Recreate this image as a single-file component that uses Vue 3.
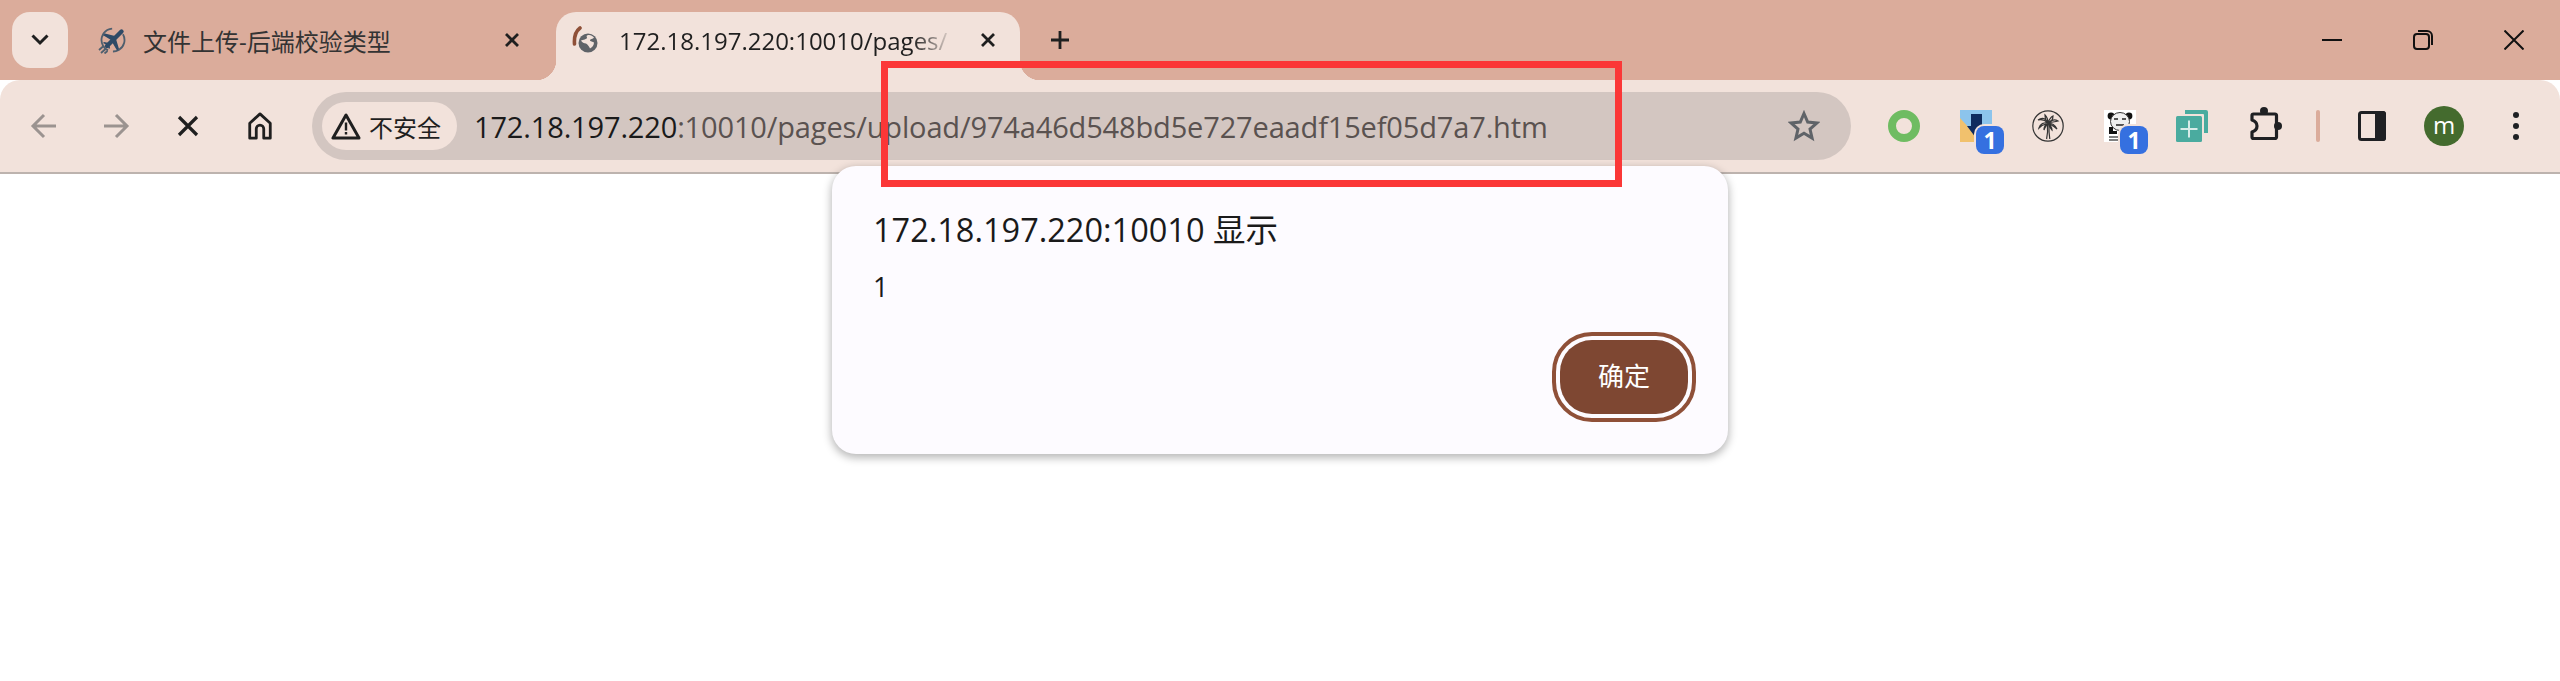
<script setup>
  const url = { host: '172.18.197.220', rest: ':10010/pages/upload/974a46d548bd5e727eaadf15ef05d7a7.htm' }
</script>

<template>
  <div class="browser">
    <div class="tabstrip">
      <button class="tab-search">
        <svg width="20" height="20" viewBox="0 0 20 20"><path d="M2.5 5.500L10 13l7.500-7.500" fill="none" stroke="#1f1f1f" stroke-width="3" /></svg>
      </button>
      <div class="tab">
        <svg class="favicon" viewBox="0 0 28 28">
          <circle cx="15" cy="14" r="11.5" fill="none" stroke="#4f5f6e" stroke-width="1.8" stroke-dasharray="24 5 30 13" transform="rotate(-30 15 14)" />
          <path d="M23.5 5.500L9 20" stroke="#2f4a66" stroke-width="4.4" stroke-linecap="round" />
          <path d="M17 10L7 7.500l-1.800 1.800L13 14zM18 13l3 10-1.800 1.800L14 16zM11 17l-5-1-1 1 4 2 2 4 1-1z" fill="#2f4a66" />
          <path d="M1 24l4-3.500M3 27l4.500-4M6.500 27.500l3-2.500" stroke="#4f5f6e" stroke-width="1.8" />
        </svg>
        <span class="tab-title">文件上传-后端校验类型</span>
        <svg class="tab-close" viewBox="0 0 16 16"><path d="M2 2l12 12M14 2L2 14" stroke="#1f1f1f" stroke-width="2.8" /></svg>
      </div>
      <div class="tab active">
        <svg class="favicon" viewBox="0 0 28 28">
          <path d="M10 2C6 5 4 11 4.500 18" fill="none" stroke="#8f5038" stroke-width="3.6" stroke-linecap="round" />
          <circle cx="18" cy="17" r="9.500" fill="#5f6368" />
          <path d="M17 9.500c3-1 5 0 7 2-1 2-4 1-4 3 0 1 3 1 4 2 0 3-2 5-4 6-1-2-2-4-4-5-2 0-4-1-5-3 2-1 6-1 6-3 0-1-1-1 0-2z" fill="#f2e2db" />
        </svg>
        <span class="tab-title url-title">172.18.197.220:10010/pages/</span>
        <svg class="tab-close" viewBox="0 0 16 16"><path d="M2 2l12 12M14 2L2 14" stroke="#1f1f1f" stroke-width="2.8" /></svg>
      </div>
      <svg class="new-tab" viewBox="0 0 20 20"><path d="M10 1v18M1 10h18" stroke="#1f1f1f" stroke-width="2.8" /></svg>
      <div class="window-btns">
        <svg viewBox="0 0 20 20"><path d="M0 10h20" stroke="#111" stroke-width="2" /></svg>
        <svg viewBox="0 0 20 20" fill="none" stroke="#111" stroke-width="2">
          <rect x="1" y="4" width="15" height="15" rx="3" />
          <path d="M5 1h9a5 5 0 0 1 5 5v9" />
        </svg>
        <svg viewBox="0 0 20 20"><path d="M0.500 0.500l19 19M19.500 0.500l-19 19" stroke="#111" stroke-width="2" /></svg>
      </div>
    </div>

    <div class="toolbar">
      <div class="nav-btns">
        <svg viewBox="0 0 28 28"><path d="M26 14H4M14 3L3 14l11 11" fill="none" stroke="#9b9390" stroke-width="3" /></svg>
        <svg viewBox="0 0 28 28"><path d="M2 14h22M14 3l11 11-11 11" fill="none" stroke="#9b9390" stroke-width="3" /></svg>
        <svg viewBox="0 0 28 28"><path d="M5 5l18 18M23 5L5 23" stroke="#1f1f1f" stroke-width="3.2" /></svg>
        <svg viewBox="0 0 28 30"><path d="M3 12L14 2l11 10v16h-7V18a4 4 0 0 0-8 0v10H3z" fill="none" stroke="#1f1f1f" stroke-width="3" stroke-linejoin="round" /></svg>
      </div>

      <div class="omnibox">
        <div class="chip">
          <svg class="warn" viewBox="0 0 30 28">
            <path d="M15 3L2 26h26z" fill="none" stroke="#1f1f1f" stroke-width="3" stroke-linejoin="round" />
            <path d="M15 10.500v8M15 20v2.600" stroke="#1f1f1f" stroke-width="2.4" />
          </svg>
          <span>不安全</span>
        </div>
        <div class="url"><span class="host">{{ url.host }}</span>{{ url.rest }}</div>
        <svg class="star" viewBox="0 0 32 32"><path d="M16 3.500l3.700 8.600 9.300.8-7 6.100 2.100 9.100-8.100-4.800-8.100 4.800 2.100-9.100-7-6.100 9.300-.8z" fill="none" stroke="#5f6368" stroke-width="3" stroke-linejoin="miter" /></svg>
      </div>

      <div class="ext-row">
        <div class="ext ring"></div>
        <div class="ext">
          <svg viewBox="0 0 32 32">
            <rect width="32" height="32" fill="#8cc4ec" />
            <path d="M0 8l22 24H0z" fill="#f1c16d" />
            <path d="M11 4h11v12h4L16 28 7 16h4z" fill="#0e2a5e" />
          </svg>
          <span class="badge">1</span>
        </div>
        <div class="ext">
          <svg viewBox="0 0 32 32" fill="none" stroke="#333" stroke-width="1.2">
            <circle cx="16" cy="16" r="15.200" />
            <path d="M14.600 29c1.200-5 1.200-10 .8-15M17.800 29c-.8-5-1-10-.8-15" />
            <path d="M16 13C14 8 10 7 6 10c3-1 7 0 10 3zM16 13c-4-1-8 1-9 5 3-3 6-4 9-5zM16 13c-2 1-4 4-4 7 1-3 3-5 4-7zM16 13c0-3-1-6-3-8 0 3 1 6 3 8zM16 13c1-3 3-6 5-7 0 3-2 6-5 7zM16 13c3-3 7-4 10-2-3 1-7 1-10 2zM16 13c4 0 7 2 9 6-3-3-6-4-9-6zM16 13c2 2 4 4 4 7-2-2-3-4-4-7z" />
          </svg>
        </div>
        <div class="ext">
          <svg viewBox="0 0 32 32">
            <rect width="32" height="32" fill="#fff" />
            <circle cx="7" cy="6" r="3.400" fill="#111" />
            <circle cx="25" cy="6" r="3.400" fill="#111" />
            <ellipse cx="16" cy="11.500" rx="9.500" ry="9" fill="#eee" stroke="#333" stroke-width="1" />
            <path d="M10 9h4M18 9h4M12 15h8" stroke="#222" stroke-width="1.6" />
            <path d="M5 17v7h8v-3H9v-4z" fill="#111" />
            <path d="M5 27h12M5 30h10" stroke="#555" stroke-width="1.4" />
          </svg>
          <span class="badge">1</span>
        </div>
        <div class="ext">
          <svg viewBox="0 0 32 32">
            <path d="M9 0h21a2 2 0 0 1 2 2v21h-4V5a1 1 0 0 0-1-1H9z" fill="#4aab9f" />
            <rect y="6" width="26" height="26" rx="1.500" fill="#4aab9f" />
            <path d="M13 10.500v17M4.500 19h17" stroke="#d7ece8" stroke-width="2" />
          </svg>
        </div>
        <svg class="puzzle" viewBox="0 0 32 34">
          <circle cx="14" cy="4" r="4" fill="#1f2023" />
          <circle cx="28" cy="19" r="4" fill="#1f2023" />
          <path d="M3.500 7h21.500a1.500 1.500 0 0 1 1.500 1.500v21.500a1.500 1.500 0 0 1-1.500 1.500H3.500A1.500 1.500 0 0 1 2 30V25c3-1 5-3.500 5-6s-2-5-5-6V8.500A1.500 1.500 0 0 1 3.500 7z" fill="none" stroke="#1f2023" stroke-width="3.2" stroke-linejoin="round" />
        </svg>
        <span class="sep"></span>
        <svg class="panel" viewBox="0 0 28 30">
          <rect x="1.500" y="1.500" width="25" height="27" rx="2" fill="none" stroke="#1f2023" stroke-width="3" />
          <path d="M17 0h8a3 3 0 0 1 3 3v24a3 3 0 0 1-3 3h-8z" fill="#1f2023" />
        </svg>
        <div class="avatar">m</div>
        <svg class="dots" viewBox="0 0 6 30">
          <circle cx="3" cy="4" r="3" fill="#1f2023" />
          <circle cx="3" cy="15" r="3" fill="#1f2023" />
          <circle cx="3" cy="26" r="3" fill="#1f2023" />
        </svg>
      </div>
    </div>

    <div class="page"></div>

    <div class="dialog">
      <div class="dialog-title">172.18.197.220:10010 显示</div>
      <div class="dialog-msg">1</div>
      <div class="dialog-actions">
        <button class="ok-btn">确定</button>
      </div>
    </div>

    <div class="red-box"></div>
  </div>
</template>

<style scoped>
  .browser {
    position: relative;
    width: 2560px;
    height: 681px;
    overflow: hidden;
    background: #fff;
    font-family: 'Open Sans', 'Noto Sans CJK SC', sans-serif;
    color: #1f1f1f;
  }

  .tabstrip {
    display: flex;
    align-items: flex-start;
    height: 80px;
    padding: 12px 0 0 12px;
    box-sizing: border-box;
    background: #dbac9b;
  }
  .tab-search {
    width: 56px;
    height: 56px;
    border: 0;
    padding: 0;
    border-radius: 18px;
    background: #f2e2db;
    display: flex;
    align-items: center;
    justify-content: center;
  }
  .tab {
    display: flex;
    align-items: center;
    height: 56px;
    width: 476px;
    padding: 0 0 0 18px;
    margin-left: 12px;
    box-sizing: border-box;
    position: relative;
  }
  .tab.active {
    width: 464px;
    height: 68px;
    margin-left: 0;
    padding: 0 0 12px 14px;
    background: #f2e2db;
    border-radius: 20px 20px 0 0;
  }
  .tab.active::before,
  .tab.active::after {
    content: '';
    position: absolute;
    bottom: 0;
    width: 20px;
    height: 20px;
  }
  .tab.active::before {
    left: -20px;
    background: radial-gradient(circle at 0 0, #dbac9b 20px, #f2e2db 20.5px);
  }
  .tab.active::after {
    right: -20px;
    background: radial-gradient(circle at 100% 0, #dbac9b 20px, #f2e2db 20.5px);
  }
  .favicon {
    width: 28px;
    height: 28px;
    flex: none;
  }
  .tab-title {
    margin-left: 17px;
    font-size: 24px;
    white-space: nowrap;
    color: #333;
  }
  .url-title {
    width: 334px;
    margin-left: 21px;
    color: #1f1f1f;
    -webkit-mask-image: linear-gradient(to right, #000 88%, transparent 100%);
    mask-image: linear-gradient(to right, #000 88%, transparent 100%);
  }
  .tab-close {
    position: absolute;
    right: 36px;
    top: 20px;
    width: 16px;
    height: 16px;
  }
  .tab.active .tab-close {
    right: 24px;
  }
  .new-tab {
    width: 20px;
    height: 20px;
    margin: 18px 0 0 30px;
    flex: none;
  }
  .window-btns {
    margin-left: auto;
    display: flex;
    gap: 71px;
    padding: 18px 36px 0 0;
  }
  .window-btns svg {
    width: 20px;
    height: 20px;
  }

  .toolbar {
    display: flex;
    align-items: center;
    height: 94px;
    box-sizing: border-box;
    background: #f2e2db;
    border-bottom: 2px solid #bdb3ae;
    border-radius: 20px 20px 0 0;
  }
  .nav-btns {
    display: flex;
    gap: 44px;
    padding-left: 30px;
  }
  .nav-btns svg {
    width: 28px;
    height: 28px;
    flex: none;
  }

  .omnibox {
    display: flex;
    align-items: center;
    width: 1539px;
    height: 68px;
    margin-left: 38px;
    padding-left: 10px;
    box-sizing: border-box;
    background: #d3c6c1;
    border-radius: 34px;
  }
  .chip {
    display: flex;
    align-items: center;
    gap: 8px;
    width: 135px;
    height: 48px;
    padding-left: 9px;
    box-sizing: border-box;
    background: #f2e2db;
    border-radius: 24px;
    font-size: 24px;
    flex: none;
  }
  .warn {
    width: 30px;
    height: 28px;
    flex: none;
  }
  .url {
    margin-left: 17px;
    font-size: 29px;
    letter-spacing: -0.15px;
    white-space: nowrap;
    color: #5a5250;
  }
  .host {
    color: #1a1a1a;
  }
  .star {
    width: 32px;
    height: 32px;
    margin-left: auto;
    margin-right: 31px;
    flex: none;
  }

  .ext-row {
    display: flex;
    align-items: center;
    margin-left: 37px;
  }
  .ext {
    position: relative;
    width: 32px;
    height: 32px;
    margin-right: 40px;
    flex: none;
  }
  .ext svg {
    display: block;
    width: 32px;
    height: 32px;
  }
  .ring {
    box-sizing: border-box;
    border: 8px solid #6fbc62;
    border-radius: 50%;
  }
  .badge {
    position: absolute;
    left: 16px;
    top: 16px;
    width: 28px;
    height: 28px;
    border-radius: 8px;
    background: #3570e0;
    box-shadow: 0 0 0 2px #f2e2db;
    color: #fff;
    font: 700 23px/28px 'Open Sans', sans-serif;
    text-align: center;
  }
  .puzzle {
    width: 32px;
    height: 34px;
    margin: 0 0 4px 2px;
    flex: none;
  }
  .sep {
    width: 4px;
    height: 32px;
    margin-left: 34px;
    background: #dbac9b;
    border-radius: 2px;
    flex: none;
  }
  .panel {
    width: 28px;
    height: 30px;
    margin-left: 38px;
    flex: none;
  }
  .avatar {
    width: 40px;
    height: 40px;
    margin-left: 38px;
    border-radius: 50%;
    background: #446b2e;
    color: #fff;
    font-size: 24px;
    line-height: 37px;
    text-align: center;
    flex: none;
  }
  .dots {
    width: 6px;
    height: 30px;
    margin-left: 49px;
    flex: none;
  }

  .page {
    height: 507px;
    background: #fff;
  }

  .dialog {
    position: absolute;
    left: 832px;
    top: 166px;
    width: 896px;
    height: 288px;
    padding: 42px 42px 40px 41px;
    box-sizing: border-box;
    display: flex;
    flex-direction: column;
    background: #fdfbff;
    border-radius: 24px;
    box-shadow: 0 3px 8px 1px rgba(0, 0, 0, 0.28);
  }
  .dialog-title {
    font-size: 32.5px;
    line-height: 44px;
    color: #1a1a1a;
  }
  .dialog-msg {
    margin-top: 17px;
    font-size: 27px;
    line-height: 36px;
    color: #1a1a1a;
  }
  .dialog-actions {
    margin-top: auto;
    display: flex;
    justify-content: flex-end;
  }
  .ok-btn {
    width: 128px;
    height: 74px;
    margin: 0 -2px 0 0;
    border: 0;
    padding: 0 0 5px;
    border-radius: 32px;
    background: #7e4732;
    color: #fff;
    font: 26px 'Noto Sans CJK SC', sans-serif;
    outline: 4px solid #8f5038;
    outline-offset: 4px;
  }

  .red-box {
    position: absolute;
    left: 881px;
    top: 61px;
    width: 741px;
    height: 126px;
    box-sizing: border-box;
    border: 7px solid #fb3737;
    pointer-events: none;
  }
</style>
